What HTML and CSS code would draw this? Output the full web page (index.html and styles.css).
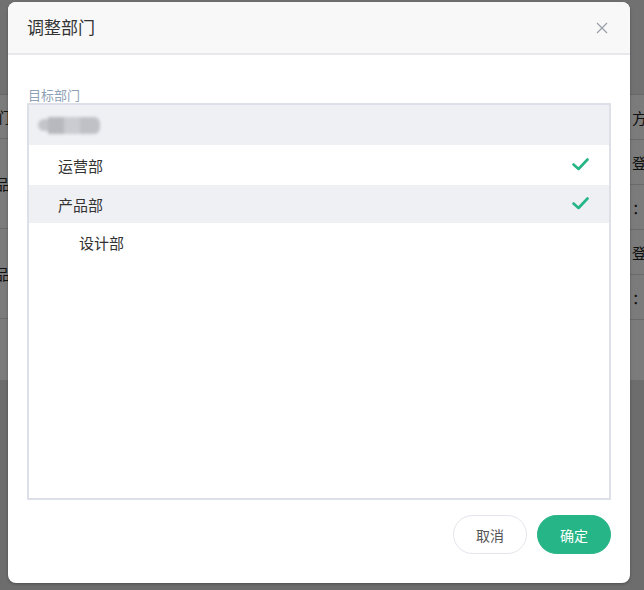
FILE: index.html
```html
<!DOCTYPE html>
<html lang="zh">
<head>
<meta charset="utf-8">
<link rel="stylesheet" href="styles.css">
</head>
<body>
<div class="page">
  <div class="page-top"></div>
  <div class="table">
    <div class="col left">
      <div class="lrow r1"><span>们</span></div>
      <div class="lrow r2"><span>品</span></div>
      <div class="lrow r3"><span>品</span></div>
    </div>
    <div class="col right">
      <div class="rrow"><span>方式</span></div>
      <div class="rrow"><span>登录</span></div>
      <div class="rrow"><span>：0</span></div>
      <div class="rrow"><span>登录</span></div>
      <div class="rrow"><span>：2</span></div>
    </div>
  </div>
</div>
<div class="mask"></div>
<div class="modal">
  <div class="modal-header">
    <span class="modal-title">调整部门</span>
    <svg class="close" width="12" height="12" viewBox="0 0 12 12"><path d="M1 1L11 11M11 1L1 11" stroke="#9aa0aa" stroke-width="1.3" fill="none"/></svg>
  </div>
  <div class="modal-body">
    <div class="label">目标部门</div>
    <div class="tree">
      <div class="node gray root"><span class="blur"><i class="b1"></i><i class="b2"></i><i class="b3"></i><i class="b4"></i></span></div>
      <div class="node l1"><span>运营部</span><svg class="check" width="17" height="13" viewBox="0 0 17 13"><path d="M1.5 6.5L6.5 11L15.5 1.5" stroke="#26b586" stroke-width="2.6" fill="none" stroke-linecap="round" stroke-linejoin="round"/></svg></div>
      <div class="node gray l1 short"><span>产品部</span><svg class="check" width="17" height="13" viewBox="0 0 17 13"><path d="M1.5 6.5L6.5 11L15.5 1.5" stroke="#26b586" stroke-width="2.6" fill="none" stroke-linecap="round" stroke-linejoin="round"/></svg></div>
      <div class="node l2"><span>设计部</span></div>
    </div>
    <div class="footer">
      <button class="btn cancel">取消</button>
      <button class="btn ok">确定</button>
    </div>
  </div>
</div>
</body>
</html>
```
FILE: styles.css
```css
* { box-sizing: border-box; }
html, body { margin: 0; padding: 0; }
body {
  width: 644px;
  height: 590px;
  overflow: hidden;
  font-family: "Noto Sans CJK SC", "Noto Sans", sans-serif;
  background: #dadada;
  position: relative;
}
.page { width: 644px; }
.page-top {
  height: 95px;
  background: #e2e2e2;
  border-bottom: 1px solid #cfcfcf;
}
.table {
  height: 285px;
  background: #f6f6f6;
  display: flex;
  justify-content: space-between;
  overflow: hidden;
}
.col { display: flex; flex-direction: column; }
.left { width: 10px; overflow: hidden; }
.right { width: 14px; overflow: hidden; }
.lrow {
  border-bottom: 1px solid #d4d4d4;
  display: flex;
  align-items: center;
  justify-content: flex-end;
  font-size: 15px;
  color: #222;
  white-space: nowrap;
}
.lrow.r1 { height: 44px; }
.lrow.r2 { height: 90px; }
.lrow.r3 { height: 90px; }
.rrow {
  height: 45px;
  border-bottom: 1px solid #d4d4d4;
  display: flex;
  align-items: center;
  padding-left: 2px;
  font-size: 15px;
  color: #222;
  white-space: nowrap;
}
.mask {
  position: absolute;
  inset: 0;
  background: rgba(0, 0, 0, 0.5);
}
.modal {
  position: absolute;
  left: 8px;
  top: 2px;
  width: 622px;
  height: 581px;
  background: #fff;
  border-radius: 8px;
  overflow: hidden;
  box-shadow: 0 1px 3px rgba(0,0,0,0.3);
  display: flex;
  flex-direction: column;
}
.modal-header {
  height: 53px;
  flex: none;
  background: #f8f8f9;
  border-bottom: 2px solid #e6e8ee;
  display: flex;
  align-items: center;
  justify-content: space-between;
  padding: 0 22px 0 19px;
}
.modal-title {
  font-size: 17px;
  color: #333;
  position: relative;
  top: -1px;
}
.modal-body {
  flex: 1;
  padding: 32px 19px 0 19px;
  display: flex;
  flex-direction: column;
}
.label {
  font-size: 13px;
  color: #8fa1b6;
  line-height: 16px;
  height: 16px;
  margin-left: 1px;
}
.tree {
  height: 397px;
  border: 2px solid #dde0e9;
  display: flex;
  flex-direction: column;
}
.node {
  height: 40px;
  flex: none;
  display: flex;
  align-items: center;
  justify-content: space-between;
  padding-right: 20px;
  font-size: 15px;
  color: #333;
}
.node.gray { background: #eff0f4; }
.node.root { padding-left: 9px; }
.node.l1 { padding-left: 29px; }
.node.short { height: 38px; }
.node.l2 { padding-left: 50px; height: 39px; }
.blur {
  display: flex;
  align-items: center;
  filter: blur(1.5px);
}
.blur i { display: block; height: 17px; }
.b1 { width: 10px; height: 12px !important; background: #c4c5ca; border-radius: 6px 0 0 6px; }
.b2 { width: 16px; background: #b8b9be; }
.b3 { width: 16px; background: #cbccd1; }
.b4 { width: 20px; background: #c0c1c7; border-radius: 0 6px 6px 0; }
.check { position: relative; top: -1px; }
.footer {
  display: flex;
  justify-content: flex-end;
  gap: 10px;
  margin-top: 15px;
}
.btn {
  width: 74px;
  height: 39px;
  border-radius: 20px;
  font-family: inherit;
  font-size: 14px;
  cursor: pointer;
}
.btn.cancel {
  background: #fff;
  border: 1px solid #e3e5eb;
  color: #555;
}
.btn.ok {
  background: #26b586;
  border: 1px solid #26b586;
  color: #fff;
}
```
